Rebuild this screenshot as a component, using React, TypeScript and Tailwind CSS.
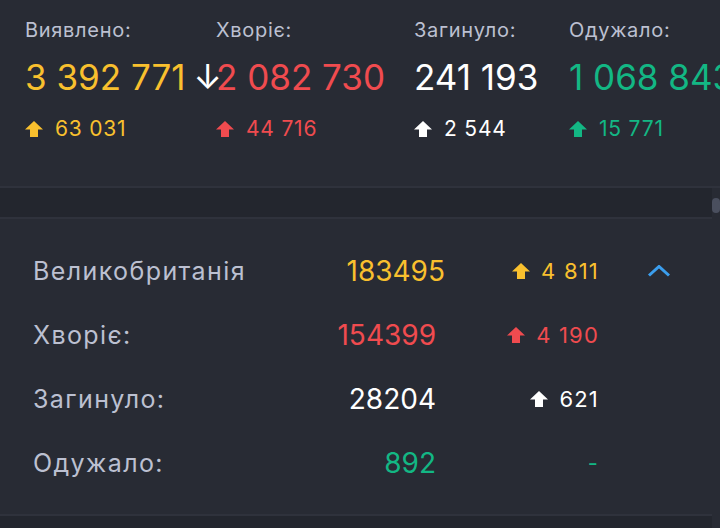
const totals = [
  { label: "Виявлено:", value: "3 392 771", delta: "63 031", color: "text-[#f9c02e]", width: "w-[191px]", sorted: true },
  { label: "Хворіє:", value: "2 082 730", delta: "44 716", color: "text-[#f04b4f]", width: "w-[198px]" },
  { label: "Загинуло:", value: "241 193", delta: "2 544", color: "text-white", width: "w-[155px]" },
  { label: "Одужало:", value: "1 068 843", delta: "15 771", color: "text-[#13b784]", width: "w-[200px]" },
];

const rows = [
  { label: "Великобританія", value: "183495", delta: "4 811", color: "text-[#f9c02e]", head: true },
  { label: "Хворіє:", value: "154399", delta: "4 190", color: "text-[#f04b4f]" },
  { label: "Загинуло:", value: "28204", delta: "621", color: "text-white" },
  { label: "Одужало:", value: "892", delta: "", color: "text-[#13b784]" },
];

function UpArrow({ className }: { className?: string }) {
  return (
    <svg viewBox="0 0 18 16" className={className} fill="currentColor">
      <path d="M9 0 L18 8.5 L13 8.5 L13 16 L5 16 L5 8.5 L0 8.5 Z" />
    </svg>
  );
}

export default function App() {
  return (
    <div className="relative h-[528px] w-[720px] overflow-hidden bg-[#282b34] font-['Inter',sans-serif]">
      <section className="flex h-[188px] overflow-hidden whitespace-nowrap border-b-2 border-[#2f323c] pl-[25px]">
        {totals.map((t) => (
          <div key={t.label} className={`flex shrink-0 flex-col ${t.width}`}>
            <p className="mt-5 text-[20px] leading-none tracking-[0.7px] text-[#bcc0d1]">{t.label}</p>
            <div className="mt-5">
              <p className={`relative inline-block text-[35px] leading-none ${t.color}`}>
                {t.value}
                {t.sorted && (
                  <span className="absolute left-full top-0 ml-[8px] text-[34px] leading-none text-white">↓</span>
                )}
              </p>
            </div>
            <div className={`mt-[22px] flex items-center gap-3 text-[21px] leading-none tracking-[0.8px] ${t.color}`}>
              <UpArrow className="h-4 w-[18px]" />
              <span>{t.delta}</span>
            </div>
          </div>
        ))}
      </section>

      <div className="flex">
        <div className="w-[712px]">
          <div className="h-[31px] border-b-2 border-[#2f323c] bg-[#23262e]" />

          <div className="pb-[19px] pt-5">
            {rows.map((r) => (
              <div key={r.label} className="flex h-16 items-center pl-[33px]">
                <p className="flex-1 text-[25px] leading-none tracking-[1.4px] text-[#bcc0d1]">{r.label}</p>
                <p className={`text-right text-[28px] leading-none ${r.color} ${r.head ? "w-[149px]" : "w-[140px]"}`}>
                  {r.value}
                </p>
                <div
                  className={`flex items-center justify-end gap-[11px] text-[22px] leading-none tracking-[1.2px] ${r.color} ${r.head ? "w-[154px]" : "w-[163px]"}`}
                >
                  {r.delta ? <UpArrow className="h-4 w-[18px]" /> : null}
                  <span>{r.delta || "-"}</span>
                </div>
                <div className="w-[113px] pl-[48px]">
                  {r.head && (
                    <svg viewBox="0 0 24 12" className="h-3 w-6" fill="none" stroke="#3b9eed" strokeWidth="3">
                      <polyline points="2,10.5 12,1.5 22,10.5" />
                    </svg>
                  )}
                </div>
              </div>
            ))}
          </div>

          <div className="h-[14px] border-t-2 border-[#2f323c] bg-[#23262e]" />
        </div>

        <div className="relative w-2">
          <div className="absolute left-0 top-[10px] h-[15px] w-2 rounded-full bg-[#4a4f5e]" />
        </div>
      </div>
    </div>
  );
}
